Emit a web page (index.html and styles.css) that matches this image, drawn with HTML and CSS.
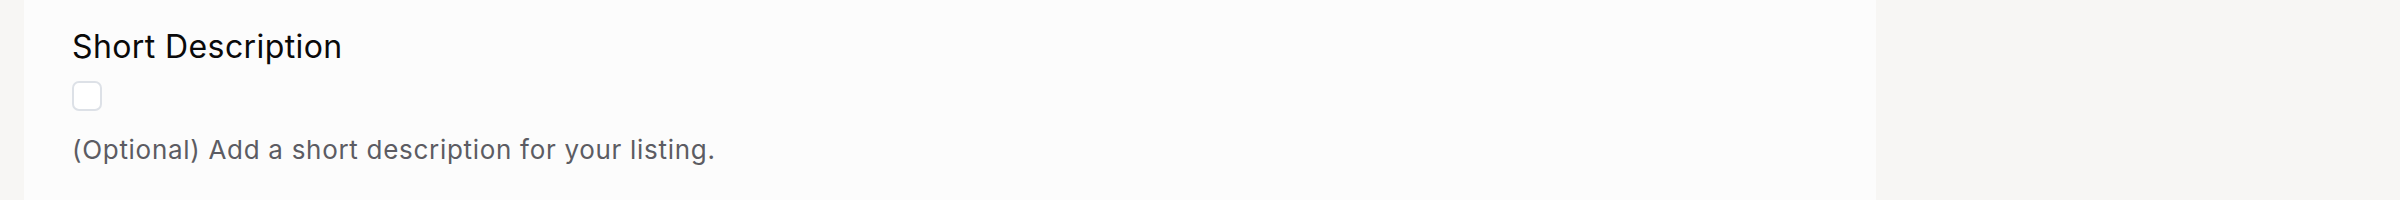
FILE: index.html
```html
<!DOCTYPE html>
<html lang="en">
<head>
    <meta charset="UTF-8">
    <title>Short Description</title>
    <link rel="stylesheet" href="styles.css">
</head>
<body>
    <div class="page">
        <div class="panel">
            <div class="field">
                <label class="field-label" for="shortDesc">Short Description</label>
                <input type="checkbox" id="shortDesc" class="check">
                <p class="field-help">(Optional) Add a short description for your listing.</p>
            </div>
        </div>
        <div class="sidebar"></div>
    </div>
</body>
</html>
```

FILE: styles.css
```css
* {
    margin: 0;
    padding: 0;
    box-sizing: border-box;
}

body {
    font-family: Inter, 'Liberation Sans', sans-serif;
    background-color: #f7f6f4;
    height: 200px;
    overflow: hidden;
}

.page {
    display: flex;
    height: 200px;
    padding-left: 24px;
}

.panel {
    width: 1852px;
    background-color: #fcfcfc;
    padding: 27px 48px 0;
}

.sidebar {
    flex: 1;
}

.field {
    display: flex;
    flex-direction: column;
    align-items: flex-start;
}

.field-label {
    font-size: 32px;
    line-height: 40px;
    letter-spacing: 0.4px;
    color: #0a0a0a;
}

.check {
    appearance: none;
    width: 30px;
    height: 30px;
    margin-top: 14px;
    border: 2px solid #dde1e7;
    border-radius: 7px;
    background-color: #fff;
}

.field-help {
    margin-top: 21px;
    font-size: 26px;
    line-height: 36px;
    letter-spacing: 0.7px;
    color: #5c5c63;
}
```
